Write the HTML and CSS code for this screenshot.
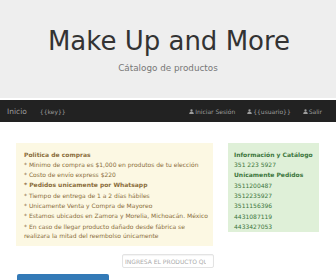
FILE: index.html
```html
<!DOCTYPE html>
<html lang="es">
<head>
    <meta charset="UTF-8">
    <meta name="viewport" content="width=device-width, initial-scale=1.0">
    <title>Make Up and More</title>
    <link rel="stylesheet" href="styles.css">
</head>
<body>
    <header class="jumbotron">
        <h1>Make Up and More</h1>
        <p class="lead">Cátalogo de productos</p>
    </header>

    <nav class="navbar">
        <a class="brand" href="#">Inicio</a>
        <a class="nav-link" href="#">{{key}}</a>
        <div class="nav-right">
            <a class="nav-link" href="#"><svg class="user" viewBox="0 0 10 10"><circle cx="5" cy="3" r="2.3"/><path d="M0.5 10 C0.5 6.4 2.5 5.6 5 5.6 C7.5 5.6 9.5 6.4 9.5 10 Z"/></svg>Iniciar Sesión</a>
            <a class="nav-link" href="#"><svg class="user" viewBox="0 0 10 10"><circle cx="5" cy="3" r="2.3"/><path d="M0.5 10 C0.5 6.4 2.5 5.6 5 5.6 C7.5 5.6 9.5 6.4 9.5 10 Z"/></svg>{{usuario}}</a>
            <a class="nav-link" href="#"><svg class="user" viewBox="0 0 10 10"><circle cx="5" cy="3" r="2.3"/><path d="M0.5 10 C0.5 6.4 2.5 5.6 5 5.6 C7.5 5.6 9.5 6.4 9.5 10 Z"/></svg>Salir</a>
        </div>
    </nav>

    <main class="content">
        <section class="left-col">
            <div class="alert alert-warning">
                <p><b>Politica de compras</b></p>
                <p>* Minimo de compra es $1,000 en produtos de tu elección</p>
                <p>* Costo de envío express $220</p>
                <p><b>* Pedidos unicamente por Whatsapp</b></p>
                <p>* Tiempo de entrega de 1 a 2 días hábiles</p>
                <p>* Unicamente Venta y Compra de Mayoreo</p>
                <p>* Estamos ubicados en Zamora y Morelia, Michoacán. México</p>
                <p>* En caso de llegar producto dañado desde fábrica se realizara la mitad del reembolso únicamente</p>
            </div>
            <div class="search-row">
                <input class="search" type="text" placeholder="Ingresa el producto que buscas">
            </div>
            <button class="btn-primary"></button>
        </section>

        <aside class="alert alert-success">
            <p><b>Información y Catálogo</b></p>
            <p>351 223 5927</p>
            <p><b>Unicamente Pedidos</b></p>
            <p>3511200487</p>
            <p>3512235927</p>
            <p>3511156396</p>
            <p>4431087119</p>
            <p>4433427053</p>
        </aside>
    </main>
</body>
</html>
```

FILE: styles.css
```css
/* BASE */

html, body {
    margin: 0;
    font-family: "DejaVu Sans", sans-serif;
    background: #fff;
    color: #333;
}

/* JUMBOTRON */

.jumbotron {
    background-color: #eeeeee;
    height: 98px;
    margin-bottom: 2px;
    text-align: center;
    padding-top: 26px;
    box-sizing: border-box;
}

.jumbotron h1 {
    font-size: 26px;
    font-weight: normal;
    line-height: 30px;
    margin: 0 0 0 2px;
}

.jumbotron .lead {
    font-size: 8.8px;
    color: #777;
    margin: 7px 0 0;
    line-height: 10px;
}

/* NAVBAR */

.navbar {
    display: flex;
    align-items: center;
    background-color: #222;
    height: 22px;
    padding: 0 7px;
}

.navbar a {
    color: #9d9d9d;
    text-decoration: none;
}

.brand {
    font-size: 7.5px;
    margin-right: 13px;
}

.nav-link {
    font-size: 6px;
    display: flex;
    align-items: center;
}

.nav-right {
    display: flex;
    margin-left: auto;
    gap: 12px;
    margin-right: 7px;
}

.user {
    width: 5px;
    height: 5px;
    fill: #9d9d9d;
    margin-right: 1px;
}

/* CONTENT */

.content {
    display: flex;
    align-items: flex-start;
    padding: 21px 0 0 16px;
    gap: 14px;
}

.left-col {
    width: 198px;
}

.alert {
    font-size: 6px;
    box-sizing: border-box;
}

.alert p {
    margin: 0 0 1.3px;
    line-height: 9px;
}

.alert-warning {
    background-color: #fcf8e3;
    color: #8a6d3b;
    width: 197px;
    padding: 6.5px 2px 5.5px 8px;
}

.alert-success {
    background-color: #dff0d8;
    color: #3c763d;
    width: 91px;
    height: 89px;
    padding: 6.5px 4px 0 6px;
}

.alert-success p {
    margin-bottom: 1.4px;
}

/* SEARCH */

.search-row {
    display: flex;
    justify-content: flex-end;
    margin-top: 8px;
}

.search {
    width: 92px;
    height: 14px;
    box-sizing: border-box;
    border: 1px solid #e3e3e3;
    border-radius: 2px;
    box-shadow: inset 0 1px 1px rgba(0, 0, 0, .05);
    font-family: "DejaVu Sans", sans-serif;
    font-size: 6px;
    text-transform: uppercase;
    padding: 0 7px 0 2px;
    outline: none;
}

.search::placeholder {
    color: #aaa;
}

.btn-primary {
    display: block;
    margin: 6px 0 0 1px;
    width: 92px;
    height: 14px;
    border: 0;
    border-radius: 2px;
    background-color: #337ab7;
}
```
